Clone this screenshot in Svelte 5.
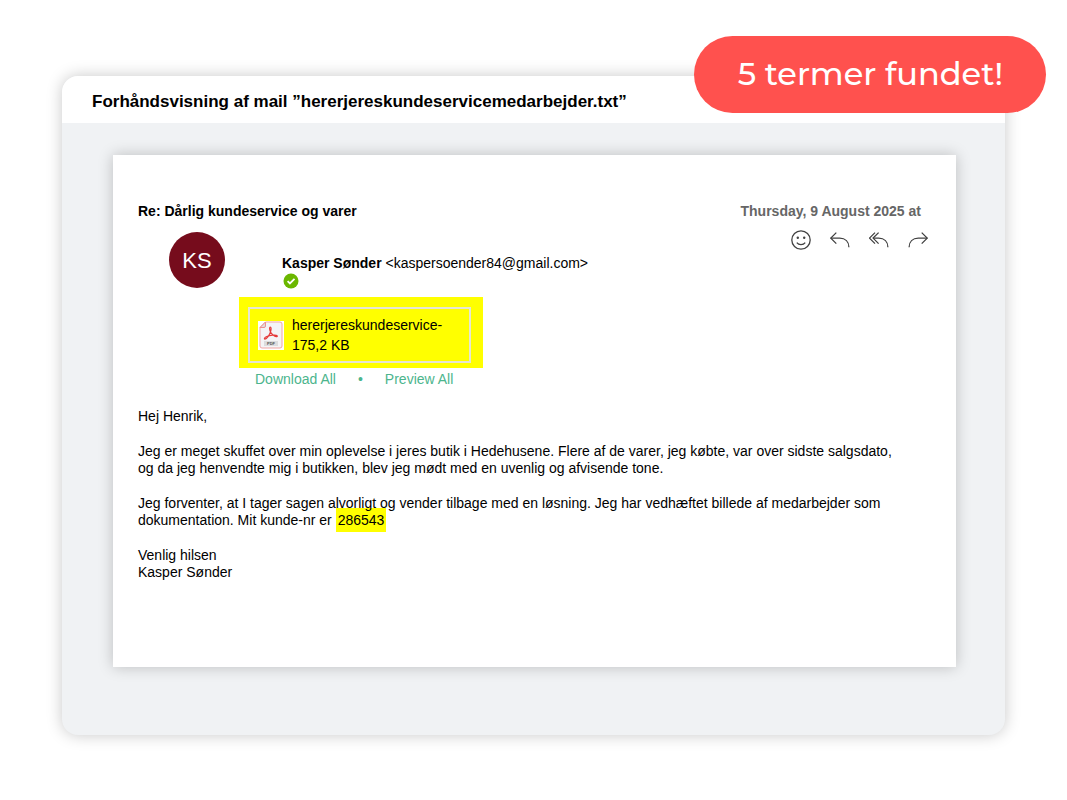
<script>
  const count = 5;
  const file = "hererjereskundeservicemedarbejder.txt";

  const sender = {
    name: "Kasper Sønder",
    email: "kaspersoender84@gmail.com",
    initials: "KS",
  };

  const attachment = { name: "hererjereskundeservice-", size: "175,2 KB" };
  const customerNo = "286543";

  const actions = [
    {
      label: "Reager",
      paths: [
        "M19.2 10a9.2 9.2 0 1 1-18.4 0a9.2 9.2 0 0 1 18.4 0z",
        "M5.8 12.6c2 2.8 6.4 2.8 8.4 0",
      ],
      eyes: true,
    },
    {
      label: "Svar",
      paths: ["M6.3 2.6L0.8 8.1l5.5 5.5", "M0.8 8.1h8.9c5.6 0 9.2 3.6 9.2 9.2"],
    },
    {
      label: "Svar alle",
      paths: ["M6 2.6L0.5 8.1l5.5 5.5", "M9.6 2.6L4.1 8.1l5.5 5.5", "M4.1 8.1h5.6c5.6 0 9.2 3.6 9.2 9.2"],
    },
    {
      label: "Videresend",
      paths: ["M13.7 2.6l5.5 5.5l-5.5 5.5", "M19.2 8.1h-8.9c-5.6 0-9.2 3.6-9.2 9.2"],
    },
  ];
</script>

<main class="page">
  <section class="window">
    <header class="titlebar">
      <h1>Forhåndsvisning af mail ”{file}”</h1>
    </header>

    <div class="canvas">
      <article class="mail">
        <div class="top">
          <h2>Re: Dårlig kundeservice og varer</h2>
          <time datetime="2025-08-09">Thursday, 9 August 2025 at</time>
        </div>

        <div class="meta">
          <div class="avatar">{sender.initials}</div>
          <div class="from">
            <p><strong>{sender.name}</strong> &lt;{sender.email}&gt;</p>
            <svg class="verified" viewBox="0 0 16 16" role="img" aria-label="Verificeret">
              <circle cx="8" cy="8" r="7.5" />
              <path d="M4.6 8.2l2.3 2.3l4.6-4.6" />
            </svg>
          </div>
          <div class="actions">
            {#each actions as action}
              <button type="button" aria-label={action.label}>
                <svg viewBox="0 0 20 20">
                  {#each action.paths as d}
                    <path {d} />
                  {/each}
                  {#if action.eyes}
                    <circle cx="6.8" cy="7.8" r="1.2" />
                    <circle cx="13.2" cy="7.8" r="1.2" />
                  {/if}
                </svg>
              </button>
            {/each}
          </div>
        </div>

        <div class="attachments">
          <div class="hit">
            <div class="file">
              <svg class="pdf" viewBox="0 0 26 29" role="img" aria-label="PDF">
                <rect width="26" height="29" fill="#ffffff" />
                <path d="M7.5 1H22a2 2 0 0 1 2 2v22a2 2 0 0 1-2 2H4a2 2 0 0 1-2-2V6.5z" fill="#f4f4f6" stroke="#f2a5a5" />
                <path d="M7.5 1v4a1.5 1.5 0 0 1-1.5 1.5H2z" fill="#dddddf" stroke="#ee8f8f" />
                <path
                  d="M12.2 6c1.2 0 1 2.6.4 4.6c-1 3.2-4 7.6-5.6 7.6c-1.4-.2-.2-1.9 1.8-2.7c3.2-1.3 8.6-2 10.2-.9c1.1 1-.9 1.5-2.6.4c-2.2-1.4-4.6-4.5-4.8-7.2c0-1 .1-1.8.6-1.8z"
                  fill="none"
                  stroke="#e43a3a"
                  stroke-width="1.2"
                />
                <rect x="6" y="20" width="14" height="5" fill="#dcdcde" />
                <text x="13" y="24" text-anchor="middle">PDF</text>
              </svg>
              <p>{attachment.name}<br />{attachment.size}</p>
            </div>
          </div>
          <div class="links">
            <a href="#download">Download All</a>
            <span>•</span>
            <a href="#preview">Preview All</a>
          </div>
        </div>

        <div class="body">
          <p>Hej Henrik,</p>
          <p>
            Jeg er meget skuffet over min oplevelse i jeres butik i Hedehusene. Flere af de varer, jeg
            købte, var over sidste salgsdato, og da jeg henvendte mig i butikken, blev jeg mødt med en
            uvenlig og afvisende tone.
          </p>
          <p>
            Jeg forventer, at I tager sagen alvorligt og vender tilbage med en løsning. Jeg har
            vedhæftet billede af medarbejder som dokumentation. Mit kunde-nr er
            <mark>{customerNo}</mark>
          </p>
          <p>Venlig hilsen<br />{sender.name}</p>
        </div>
      </article>
    </div>
  </section>

  <div class="badge" role="status">{count} termer fundet!</div>
</main>

<style>
  :global(body) {
    background: #ffffff;
  }
  .page {
    position: relative;
    padding: 76px 62px 64px;
    font-family: "Liberation Sans", Arial, sans-serif;
    font-size: 14px;
    line-height: 17px;
    color: #000000;
  }
  h1,
  h2,
  p {
    margin: 0;
  }
  .window {
    border-radius: 16px;
    background: #f0f2f4;
    box-shadow: 0 0 16px rgba(0, 0, 0, 0.22);
    overflow: hidden;
  }
  .titlebar {
    padding: 16px 30px 11px;
    background: #ffffff;
  }
  h1 {
    font-size: 17px;
    line-height: 20px;
  }
  .canvas {
    padding: 32px 49px 68px 51px;
  }
  .mail {
    padding: 48px 24px 86px 25px;
    background: #ffffff;
    box-shadow: 0 0 14px rgba(0, 0, 0, 0.22);
  }
  .top {
    display: flex;
    justify-content: space-between;
    padding-right: 11px;
  }
  h2 {
    font-size: 14px;
  }
  time {
    font-weight: 700;
    color: #666666;
  }
  .meta {
    display: flex;
    align-items: flex-start;
    padding: 10px 0 0 31px;
  }
  .avatar {
    display: grid;
    place-items: center;
    width: 56px;
    height: 56px;
    margin-top: 2px;
    border-radius: 50%;
    background: #760c1c;
    color: #ffffff;
    font-size: 22px;
  }
  .from {
    flex: 1;
    padding: 25px 0 0 57px;
  }
  .verified {
    display: block;
    width: 16px;
    height: 16px;
    margin: 1px 1px 0;
  }
  .verified circle {
    fill: #6bb700;
  }
  .verified path {
    fill: none;
    stroke: #ffffff;
    stroke-width: 1.8;
  }
  .actions {
    display: flex;
    gap: 19px;
    padding-right: 4px;
  }
  .actions button {
    width: 20px;
    height: 20px;
    padding: 0;
    border: 0;
    background: none;
    cursor: pointer;
  }
  .actions svg {
    display: block;
    width: 20px;
    height: 20px;
    fill: none;
    stroke: #424242;
    stroke-width: 1.3;
  }
  .actions circle {
    fill: #424242;
    stroke: none;
  }
  .attachments {
    width: 244px;
    margin: 8px 0 0 101px;
  }
  .hit {
    padding: 10px 12px 5px 9px;
    background: #ffff00;
  }
  .file {
    display: flex;
    align-items: center;
    gap: 8px;
    padding: 6px 8px;
    border: 2px solid #e6e6d2;
    line-height: 20px;
  }
  .pdf {
    width: 26px;
    height: 29px;
  }
  .pdf text {
    font-size: 4px;
    font-weight: 700;
    fill: #555555;
  }
  .links {
    display: flex;
    gap: 22px;
    padding: 3px 16px 0;
    color: #4cb58d;
  }
  .links a {
    color: inherit;
    text-decoration: none;
  }
  .body {
    display: grid;
    gap: 18px;
    margin-top: 20px;
    padding-right: 32px;
    isolation: isolate;
  }
  /* painted under the line above, so its descenders stay whole */
  mark {
    position: relative;
    z-index: -1;
    padding: 4px 2px;
    background: #ffff00;
    color: inherit;
  }
  .badge {
    position: absolute;
    top: 36px;
    right: 21px;
    padding: 18px 43px 19px 44px;
    border-radius: 39px;
    background: #ff514e;
    color: #ffffff;
    font-family: Montserrat, Inter, sans-serif;
    font-size: 32px;
    font-weight: 500;
    line-height: 40px;
    white-space: nowrap;
  }
</style>
